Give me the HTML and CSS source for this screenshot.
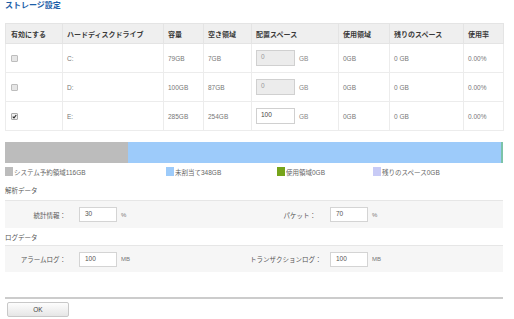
FILE: index.html
```html
<!DOCTYPE html>
<html lang="ja">
<head>
<meta charset="utf-8">
<link rel="stylesheet" href="styles.css">
</head>
<body>
<div class="page">
  <div class="title">ストレージ設定</div>
  <table class="grid">
    <colgroup>
      <col class="c1"><col class="c2"><col class="c3"><col class="c4">
      <col class="c5"><col class="c6"><col class="c7"><col class="c8">
    </colgroup>
    <thead>
      <tr><th>有効にする</th><th>ハードディスクドライブ</th><th>容量</th><th>空き領域</th><th>配置スペース</th><th>使用領域</th><th>残りのスペース</th><th>使用率</th></tr>
    </thead>
    <tbody>
      <tr><td><span class="cb"></span></td><td>C:</td><td>79GB</td><td>7GB</td><td><span class="tin dis">0</span><span class="unit">GB</span></td><td>0GB</td><td>0 GB</td><td>0.00%</td></tr>
      <tr><td><span class="cb"></span></td><td>D:</td><td>100GB</td><td>87GB</td><td><span class="tin dis">0</span><span class="unit">GB</span></td><td>0GB</td><td>0 GB</td><td>0.00%</td></tr>
      <tr><td><span class="cb on"><svg viewBox="0 0 8 8" width="7" height="7"><path d="M1.2 4.2 L3.2 6.2 L6.8 1.6" fill="none" stroke="#222" stroke-width="1.7"/></svg></span></td><td>E:</td><td>285GB</td><td>254GB</td><td><span class="tin">100</span><span class="unit">GB</span></td><td>0GB</td><td>0 GB</td><td>0.00%</td></tr>
    </tbody>
  </table>
  <div class="bar">
    <div class="seg sys" style="width:123px"></div>
    <div class="seg free"></div>
    <div class="seg used" style="width:2px"></div>
  </div>
  <div class="legend">
    <div class="lg l1"><span class="sq sys"></span>システム予約領域116GB</div>
    <div class="lg l2"><span class="sq free"></span>未割当て348GB</div>
    <div class="lg l3"><span class="sq usedg"></span>使用領域0GB</div>
    <div class="lg l4"><span class="sq rest"></span>残りのスペース0GB</div>
  </div>
  <div class="sec sec1">解析データ</div>
  <div class="frow r1">
    <div class="field f1"><span class="lbl">統計情報：</span><span class="in">30</span><span class="u">%</span></div>
    <div class="field f2"><span class="lbl">パケット：</span><span class="in">70</span><span class="u">%</span></div>
  </div>
  <div class="sec sec2">ログデータ</div>
  <div class="frow r2">
    <div class="field f1"><span class="lbl">アラームログ：</span><span class="in">100</span><span class="u">MB</span></div>
    <div class="field f2"><span class="lbl">トランザクションログ：</span><span class="in">100</span><span class="u">MB</span></div>
  </div>
  <div class="footer">
    <button class="ok">OK</button>
  </div>
</div>
</body>
</html>
```
FILE: styles.css
```css
* { box-sizing: border-box; }
body {
  margin: 0;
  background: #fff;
  font-family: "Liberation Sans", "Noto Sans CJK JP", sans-serif;
  color: #555;
}
.page {
  width: 498px;
  margin-left: 5px;
}
.title {
  height: 23px;
  line-height: 11px;
  font-size: 8px;
  font-weight: bold;
  color: #1d5ea8;
}
.grid {
  width: 498px;
  border-collapse: collapse;
  table-layout: fixed;
  border: 1px solid #e6e6e6;
  font-size: 6.5px;
}
.c1 { width: 57px; }
.c2 { width: 101px; }
.c3 { width: 40px; }
.c4 { width: 48px; }
.c5 { width: 87px; }
.c6 { width: 51px; }
.c7 { width: 74px; }
.c8 { width: 40px; }
.grid th {
  height: 20px;
  background: #efefef;
  text-align: left;
  font-weight: bold;
  color: #3a3a3a;
  font-size: 7px;
  padding: 0 4px;
  border: 1px solid #e4e4e4;
  white-space: nowrap;
}
.grid td {
  height: 29px;
  padding: 0 4px;
  border: 1px solid #ececec;
  color: #777;
  white-space: nowrap;
  vertical-align: middle;
}
.grid td:first-child, .grid th:first-child { padding-left: 5px; }
.cb {
  display: inline-flex;
  align-items: center;
  justify-content: center;
  width: 7px;
  height: 7px;
  border: 1px solid #bdbdbd;
  background: #e6e6e6;
  vertical-align: middle;
  border-radius: 1px;
}
.cb.on { background: #efefef; border-color: #aaa; }
.cb svg { display: block; }
.tin {
  display: inline-block;
  width: 39px;
  height: 16px;
  line-height: 12px;
  border: 1px solid #d0d0d0;
  background: #fff;
  padding-left: 4px;
  font-size: 6.5px;
  color: #444;
  vertical-align: middle;
}
.tin.dis { background: #ececec; color: #999; }
.unit { margin-left: 4px; vertical-align: middle; color: #888; }
.bar {
  margin-top: 11px;
  height: 21px;
  display: flex;
}
.seg { height: 100%; }
.seg.sys { background: #bcbcbc; }
.seg.free { flex: 1; background: #9dcbfa; }
.seg.used { background: #7cc3a8; }
.legend {
  margin-top: 3px;
  height: 11px;
  display: flex;
  font-size: 6.5px;
  color: #666;
}
.lg { display: flex; align-items: center; white-space: nowrap; }
.l1 { width: 161px; }
.l2 { width: 111px; }
.l3 { width: 96px; }
.sq { display: inline-block; width: 8px; height: 9px; margin-right: 1px; }
.sq.sys { background: #bcbcbc; }
.sq.free { background: #9dcbfa; }
.sq.usedg { background: #76a41a; }
.sq.rest { background: #c8cbf6; }
.sec {
  font-size: 6.5px;
  color: #555;
  line-height: 12px;
  border-bottom: 1px solid #e6e6e6;
}
.sec1 { padding-top: 8px; padding-bottom: 3px; }
.sec2 { padding-top: 4px; padding-bottom: 1px; }
.frow {
  display: flex;
  align-items: center;
  background: #f6f6f6;
  font-size: 6.5px;
  color: #555;
}
.r1 { height: 27px; }
.r2 { height: 26px; }
.field { display: flex; align-items: center; }
.f1 { width: 245px; }
.f1 .lbl { width: 61px; margin-right: 13px; }
.f2 .lbl { width: 66px; margin-right: 14px; }
.lbl { text-align: right; white-space: nowrap; }
.in {
  display: inline-block;
  width: 38px;
  height: 15px;
  line-height: 11px;
  border: 1px solid #d4d4d4;
  background: #fff;
  padding-left: 5px;
  color: #555;
}
.u { margin-left: 4px; color: #777; font-size: 6px; }
.footer {
  margin-top: 25px;
  border-top: 2px solid #cccccc;
  padding-top: 3px;
  padding-left: 2px;
}
.ok {
  display: block;
  width: 62px;
  height: 15px;
  border: 1px solid #c8c8c8;
  border-radius: 2px;
  background: linear-gradient(#fdfdfd, #e6e6e6);
  font-family: "Liberation Sans", sans-serif;
  font-size: 6.5px;
  color: #444;
  padding: 0;
}
```
